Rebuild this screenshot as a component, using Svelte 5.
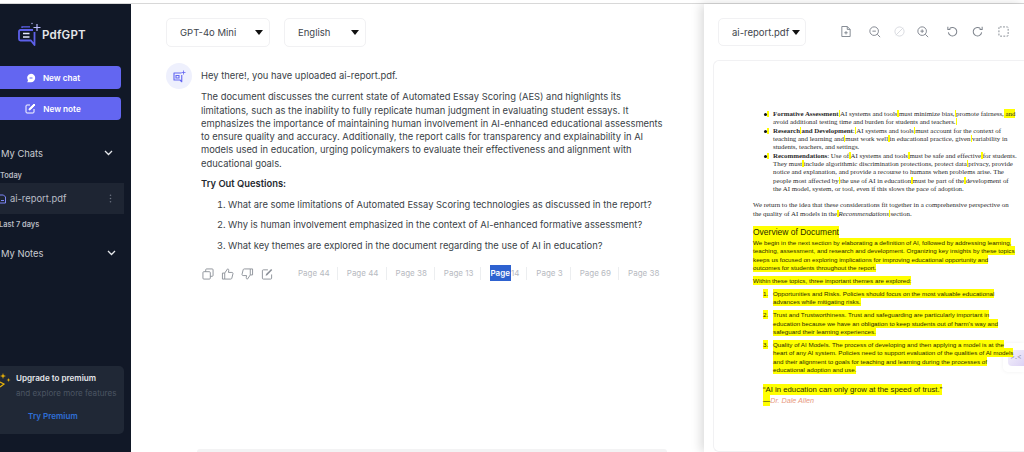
<script lang="ts">
	const questions = [
		'What are some limitations of Automated Essay Scoring technologies as discussed in the report?',
		'Why is human involvement emphasized in the context of AI-enhanced formative assessment?',
		'What key themes are explored in the document regarding the use of AI in education?'
	];
	const pages = [
		{ label: 'Page 44' },
		{ label: 'Page 44' },
		{ label: 'Page 38' },
		{ label: 'Page 13' },
		{ label: '14', picked: 'Page' },
		{ label: 'Page 3' },
		{ label: 'Page 69' },
		{ label: 'Page 38' }
	];

	// "|" marks the little highlight slivers the pdf viewer leaves between words
	const bullets = [
		[
			{ bold: 'Formative Assessment', text: '|AI systems and tools|must minimize bias,|promote fairness,', tail: ' and' },
			{ text: 'avoid additional testing time and burden for students and teachers.|' }
		],
		[
			{ bold: 'Research|and Development', text: ':|AI systems and tools|must account for the context of' },
			{ text: 'teaching and learning and|must work well|in educational practice, given|variability in' },
			{ text: 'students, teachers, and settings.' }
		],
		[
			{ bold: 'Recommendations', text: ': Use of|AI systems and tools|must be safe and effective|for students.' },
			{ text: 'They must|include algorithmic discrimination protections, protect data|privacy, provide' },
			{ text: 'notice and explanation, and provide a recourse to humans when problems arise. The' },
			{ text: 'people most affected by|the use of AI in education|must be part of the|development of' },
			{ text: 'the AI model, system, or tool, even if this slows the pace of adoption.' }
		]
	];
	const overview = [
		'We begin in the next section by elaborating a definition of AI, followed by addressing learning,',
		'teaching, assessment, and research and development. Organizing key insights by these topics',
		'keeps us focused on exploring implications for improving educational opportunity and',
		'outcomes for students throughout the report.'
	];
	const themes = [
		[
			'Opportunities and Risks. Policies should focus on the most valuable educational',
			'advances while mitigating risks.'
		],
		[
			'Trust and Trustworthiness. Trust and safeguarding are particularly important in',
			'education because we have an obligation to keep students out of harm\u2019s way and',
			'safeguard their learning experiences.'
		],
		[
			'Quality of AI Models. The process of developing and then applying a model is at the',
			'heart of any AI system. Policies need to support evaluation of the qualities of AI models',
			'and their alignment to goals for teaching and learning during the processes of',
			'educational adoption and use.'
		]
	];
</script>

{#snippet ticks(text)}
	{#each text.split('|') as piece, i}{#if i > 0}<mark class="tick"></mark>{/if}{piece}{/each}
{/snippet}

<div class="page">
	<div class="topline"></div>
	<div class="shell">
		<aside class="sidebar">
			<div class="brand">
				<svg width="24" height="26" viewBox="0 0 24 26" fill="none" stroke="#5d60ea" stroke-width="1.800">
					<path d="M15 8H2.500A1.500 1.500 0 0 0 1 9.500V17a1.500 1.500 0 0 0 1.500 1.500H13l3.500 4.500V10" stroke-linejoin="round" />
					<path d="M5 11.500h6.500M5 15h6.500" stroke="#e5e7ff" stroke-width="1.400" />
					<path d="M4 6V4.800h8" stroke-width="1.300" />
					<path d="M19 2v7M15.500 5.500h7" stroke="#b9bbff" stroke-width="1.200" />
					<circle cx="14" cy="1.500" r=".7" fill="#b9bbff" stroke="none" />
				</svg>
				<span>PdfGPT</span>
			</div>

			<button class="cta">
				<svg width="10" height="10" viewBox="0 0 10 10"><path d="M5 .8a4.200 4.200 0 0 1 0 8.400H1.200l.8-1.600A4.200 4.200 0 0 1 5 .8z" fill="#fff" /><path d="M3.500 5h3" stroke="#6366f1" /></svg>
				New chat
			</button>
			<button class="cta">
				<svg width="11" height="11" viewBox="0 0 11 11" fill="none" stroke="#fff" stroke-width="1"><path d="M9 6v3a1 1 0 0 1-1 1H2a1 1 0 0 1-1-1V3a1 1 0 0 1 1-1h3" /><path d="M4 7l.4-1.600L9 1l1 1-4.500 4.600z" fill="#fff" /></svg>
				New note
			</button>

			<div class="group first">
				<span>My Chats</span>
				<svg class="chev" width="9" height="6" viewBox="0 0 9 6" fill="none" stroke="#e5e7eb" stroke-width="1.300"><path d="M1 1l3.500 3.500L8 1" /></svg>
			</div>
			<div class="when">Today</div>
			<div class="chat">
				<svg width="6" height="10" viewBox="0 0 6 10" fill="none" stroke="#7c86f5" stroke-width="1"><path d="M-1 1h4.500L5.500 3v6H-1z" /><path d="M1 6.500h3" /></svg>
				<span>ai-report.pdf</span>
				<svg class="dots" width="3" height="9" viewBox="0 0 3 9" fill="#6b7280"><circle cx="1.500" cy="1.200" r=".8" /><circle cx="1.500" cy="4.500" r=".8" /><circle cx="1.500" cy="7.800" r=".8" /></svg>
			</div>
			<div class="when later">Last 7 days</div>
			<div class="group notes">
				<span>My Notes</span>
				<svg class="chev" width="9" height="6" viewBox="0 0 9 6" fill="none" stroke="#e5e7eb" stroke-width="1.300"><path d="M1 1l3.500 3.500L8 1" /></svg>
			</div>

			<div class="premium">
				<div class="premium-head">
					<svg class="spark" width="11" height="16" viewBox="0 0 11 16" fill="#eab308"><path d="M3 0l.7 2.300L6 3l-2.300.7L3 6l-.7-2.300L0 3l2.300-.7zM8.500 5l.5 1.500 1.500.5-1.500.5-.5 1.500L8 7.500 6.500 7 8 6.500z" /><path d="M0 9l4 2-4 3" fill="none" stroke="#eab308" stroke-width="1.200" /></svg>
					<div>
						<strong>Upgrade to premium</strong>
						<p>and explore more features</p>
					</div>
				</div>
				<a href="#premium">Try Premium</a>
			</div>
		</aside>

		<main class="chatpane">
			<div class="selects">
				<div class="pick model">
					<span>GPT-4o Mini</span>
					<i class="caret"></i>
				</div>
				<div class="pick lang">
					<span>English</span>
					<i class="caret"></i>
				</div>
			</div>

			<div class="message">
				<div class="avatar">
					<svg width="14" height="14" viewBox="0 0 28 28" fill="none" stroke="#6366f1" stroke-width="2.200">
						<path d="M19 8H4v14h12l3.500 3.500V12" stroke-linejoin="round" />
						<path d="M8 13h6v5H8z" />
						<path d="M23 3v8M19 7h8" stroke-width="1.600" />
					</svg>
				</div>
				<div class="body">
					<p class="hello">Hey there!, you have uploaded ai-report.pdf.</p>
					<p class="summary">
						The document discusses the current state of Automated Essay Scoring (AES) and highlights its
						limitations, such as the inability to fully replicate human judgment in evaluating student essays. It
						emphasizes the importance of maintaining human involvement in AI-enhanced educational assessments
						to ensure quality and accuracy. Additionally, the report calls for transparency and explainability in AI
						models used in education, urging policymakers to evaluate their effectiveness and alignment with
						educational goals.
					</p>
					<h4>Try Out Questions:</h4>
					<ol>
						{#each questions as q}
							<li>{q}</li>
						{/each}
					</ol>

					<div class="actions">
						<div class="tools">
							<svg width="12" height="12" viewBox="0 0 13 13" fill="none" stroke="#8b9098"><rect x="1" y="4" width="8" height="8" rx="1" /><path d="M4 4V2a1 1 0 0 1 1-1h6a1 1 0 0 1 1 1v6a1 1 0 0 1-1 1H9" /></svg>
							<svg width="13" height="12" viewBox="0 0 14 13" fill="none" stroke="#8b9098"><path d="M4 5.500V12H1.500V5.500zM4 5.500L7 1c1.200 0 1.600.9 1.300 2L8 4.800h3.800c.9 0 1.300.7 1.100 1.500l-1.200 4.800c-.2.600-.6.900-1.200.9H4" stroke-linejoin="round" /></svg>
							<svg width="13" height="12" viewBox="0 0 14 13" fill="none" stroke="#8b9098"><path d="M10 7.500V1h2.500v6.500zM10 7.500L7 12c-1.200 0-1.600-.9-1.300-2L6 8.200H2.200c-.9 0-1.300-.7-1.100-1.500l1.200-4.800C2.500 1.300 2.900 1 3.500 1H10" stroke-linejoin="round" /></svg>
							<svg width="12" height="12" viewBox="0 0 13 13" fill="none" stroke="#8b9098"><path d="M11.500 7v4a1 1 0 0 1-1 1h-8a1 1 0 0 1-1-1V3a1 1 0 0 1 1-1h5" /><path d="M5 8.500l.5-2L11 1l1.200 1.200-5.500 5.600z" fill="#8b9098" stroke="none" /></svg>
						</div>
						<div class="pages">
							{#each pages as p}
								<span class="pg">{#if p.picked}<em>{p.picked}</em>{/if}{p.label}</span>
							{/each}
						</div>
					</div>
				</div>
			</div>

			<div class="composer"></div>
		</main>

		<section class="viewer">
			<div class="viewer-bar">
				<div class="pick file">
					<span>ai-report.pdf</span>
					<i class="caret"></i>
				</div>
				<div class="viewer-tools">
					<svg class="t-file" width="10" height="13" viewBox="0 0 12 14" fill="none" stroke="#7d838c" stroke-width="1.100"><path d="M1 1h6.500L11 4.500V13H1zM7.500 1v3.500H11" /><path d="M6 6.500v4M4 8.500h4" /></svg>
					<svg class="t-out" width="12" height="12" viewBox="0 0 14 14" fill="none" stroke="#7d838c" stroke-width="1.100"><circle cx="6" cy="6" r="5" /><path d="M4 6h4M9.700 9.700L13 13" /></svg>
					<svg class="t-off" width="11" height="11" viewBox="0 0 12 12" fill="none" stroke="#d6d9de"><circle cx="6" cy="6" r="5" /><path d="M2 10l8-8" /></svg>
					<svg class="t-in" width="12" height="12" viewBox="0 0 14 14" fill="none" stroke="#7d838c" stroke-width="1.100"><circle cx="6" cy="6" r="5" /><path d="M4 6h4M6 4v4M9.700 9.700L13 13" /></svg>
					<svg class="t-undo" width="11" height="11" viewBox="0 0 13 13" fill="none" stroke="#7d838c" stroke-width="1.200"><path d="M3 3.200A5 5 0 1 1 1.600 7.500" /><path d="M1 1v3h3" /></svg>
					<svg class="t-redo" width="11" height="11" viewBox="0 0 13 13" fill="none" stroke="#7d838c" stroke-width="1.200"><path d="M10 3.200A5 5 0 1 0 11.400 7.500" /><path d="M12 1v3H9" /></svg>
					<svg class="t-crop" width="12" height="12" viewBox="0 0 13 13" fill="none" stroke="#7d838c" stroke-dasharray="2 1.500"><rect x="1" y="1" width="10" height="10" rx="1" /></svg>
				</div>
			</div>

			<div class="paper">
				<ul class="bullets">
					{#each bullets as item}
						<li>
							<mark class="dotmark"></mark>
							{#each item as line}
								<div class="ln">{#if line.bold}<b>{@render ticks(line.bold)}</b>{/if}{@render ticks(line.text)}{#if line.tail}<mark>{line.tail}</mark>{/if}</div>
							{/each}
						</li>
					{/each}
				</ul>
				<div class="return">
					<div class="ln">We return to the idea that these considerations fit together in a comprehensive perspective on</div>
					<div class="ln">the quality of AI models in the<mark class="tick"></mark><i>Recommendations</i><mark class="tick"></mark>section.</div>
				</div>

				<div class="sans">
					<h3><mark>Overview of Document</mark></h3>
					<div class="para">
						{#each overview as line}
							<div class="ln"><mark>{line}</mark></div>
						{/each}
					</div>
					<div class="ln within"><mark>Within these topics, three important themes are explored:</mark></div>
					{#each themes as theme, t}
						<div class="theme">
							<span class="num"><mark>{t + 1}.</mark></span>
							<div>
								{#each theme as line}
									<div class="ln"><mark>{line}</mark></div>
								{/each}
							</div>
						</div>
					{/each}
					<div class="quote"><mark>“AI in education can only grow at the speed of trust.”</mark></div>
					<div class="cite"><mark>—</mark><i>Dr. Dale Allen</i></div>
				</div>
			</div>

			<div class="float"></div>
		</section>
	</div>
</div>

<style>
	:global(body) {
		margin: 0;
		background: #fff;
	}

	.page {
		width: 1024px;
		height: 452px;
		overflow: hidden;
		display: flex;
		flex-direction: column;
		font-family: Inter, 'Noto Sans', sans-serif;
	}

	.topline {
		height: 3px;
		flex: none;
		background: #fff;
		border-bottom: 1px solid #d8d8d8;
	}

	.shell {
		flex: 1;
		min-height: 0;
		display: flex;
	}

	/* sidebar */
	.sidebar {
		width: 131px;
		flex: none;
		box-sizing: border-box;
		background: #111827;
		display: flex;
		flex-direction: column;
		padding-right: 10px;
		color: #d1d5db;
	}

	.brand {
		display: flex;
		align-items: center;
		gap: 0;
		height: 38px;
		margin: 12px 0 12px 18px;
		font-size: 11.500px;
		font-weight: 600;
		color: #e5e7eb;
		letter-spacing: 0.2px;
	}

	.cta {
		height: 23px;
		flex: none;
		border: 0;
		border-radius: 0 4px 4px 0;
		background: #6366f1;
		color: #fff;
		font: 600 8.200px Inter, sans-serif;
		display: flex;
		align-items: center;
		justify-content: center;
		gap: 7px;
		padding: 0 15px 0 0;
		margin-bottom: 8px;
	}

	.group {
		display: flex;
		justify-content: space-between;
		align-items: center;
		padding-left: 1px;
		font-size: 9.400px;
		color: #c9ccd2;
		height: 14px;
	}

	.group.first {
		margin-top: 18px;
		padding-right: 8px;
	}

	.group.notes {
		margin-top: 16px;
		padding-right: 5px;
	}

	.when {
		font-size: 7.400px;
		font-weight: 600;
		color: #b6bac2;
		margin-top: 10px;
		height: 11px;
		line-height: 11px;
	}

	.when.later {
		margin-top: 5px;
		margin-left: -1px;
	}

	.chat {
		height: 31px;
		flex: none;
		margin-top: 2px;
		margin-right: -3px;
		background: #1e2533;
		display: flex;
		align-items: center;
		padding: 0 12px 0 0;
		gap: 4px;
		font-size: 9.400px;
		color: #b9bdc6;
	}

	.chat span {
		flex: 1;
	}

	.premium {
		margin-top: auto;
		margin-bottom: 18px;
		margin-right: -3px;
		height: 68px;
		flex: none;
		box-sizing: border-box;
		background: #202836;
		border-radius: 0 5px 5px 0;
		padding-top: 7px;
		position: relative;
	}

	.premium-head {
		display: flex;
		gap: 5px;
	}

	.premium strong {
		display: block;
		font-size: 8.100px;
		font-weight: 600;
		color: #e5e7eb;
		line-height: 11px;
	}

	.premium p {
		margin: 4px 0 0;
		font-size: 8.100px;
		color: #4b5563;
		line-height: 11px;
		white-space: nowrap;
	}

	.premium a {
		display: block;
		margin: 12px 0 0 28px;
		font-size: 8.100px;
		font-weight: 600;
		color: #2f6fd6;
		text-decoration: none;
		line-height: 11px;
	}

	/* chat column */
	.chatpane {
		width: 573px;
		flex: none;
		box-sizing: border-box;
		background: #fff;
		display: flex;
		flex-direction: column;
		padding-top: 14px;
	}

	.selects {
		display: flex;
		gap: 14px;
		padding-left: 35px;
	}

	.pick {
		height: 29px;
		box-sizing: border-box;
		border: 1px solid #f1f1f3;
		border-radius: 5px;
		display: flex;
		align-items: center;
		justify-content: space-between;
		font-size: 9.500px;
		color: #41454c;
		white-space: nowrap;
	}

	.model {
		width: 104px;
		padding: 0 4px 0 13px;
	}

	.lang {
		width: 82px;
		padding: 0 4px 0 13px;
	}

	.caret {
		width: 0;
		height: 0;
		border-left: 4.500px solid transparent;
		border-right: 4.500px solid transparent;
		border-top: 5px solid #111;
		margin-right: 2px;
	}

	.message {
		display: flex;
		gap: 9px;
		padding: 16px 0 0 35px;
	}

	.avatar {
		width: 26px;
		height: 26px;
		flex: none;
		border-radius: 50%;
		background: #eef0fd;
		display: flex;
		align-items: center;
		justify-content: center;
	}

	.body {
		flex: 1;
		min-width: 0;
		font-size: 9.400px;
		line-height: 13.300px;
		color: #3a3f47;
		padding-top: 6px;
	}

	.body p {
		margin: 0;
	}

	.hello {
		margin-bottom: 8px !important;
	}

	.summary {
		width: 480px;
		white-space: pre-line;
	}

	.body h4 {
		margin: 7px 0 0;
		font-size: 9.400px;
		font-weight: 600;
		line-height: 13.300px;
		color: #262a30;
	}

	.body ol {
		margin: 8px 0 0;
		padding: 0 0 0 27px;
		white-space: nowrap;
	}

	.body li {
		margin-bottom: 6.800px;
	}

	.actions {
		display: flex;
		align-items: center;
		margin-top: 14px;
		height: 16px;
	}

	.tools {
		display: flex;
		gap: 7px;
		width: 97px;
		flex: none;
		box-sizing: border-box;
		padding-left: 1px;
	}

	.pages {
		display: flex;
		font-size: 8px;
		color: #b7bac1;
		white-space: nowrap;
	}

	.pg {
		padding: 0 7px 0 9px;
		line-height: 13px;
		border-right: 1px solid #eceef0;
	}

	.pg:first-child {
		padding-left: 0;
	}

	.pg:last-child {
		border-right: 0;
	}

	.pg em {
		font-style: normal;
		font-weight: 600;
		background: #2e62d0;
		color: #fff;
		padding: 3px 1px 3px 0;
	}

	.composer {
		margin: auto 37px 0 66px;
		height: 3px;
		flex: none;
		background: #f3f3f4;
		border-radius: 4px 4px 0 0;
	}

	/* pdf side */
	.viewer {
		flex: 1;
		min-width: 0;
		position: relative;
		background: #fff;
		box-shadow: -3px 0 10px rgba(0, 0, 0, 0.15);
		display: flex;
		flex-direction: column;
		padding-top: 14px;
	}

	.viewer-bar {
		display: flex;
		padding-left: 14px;
		height: 27px;
		flex: none;
	}

	.file {
		width: 88px;
		height: 28px;
		padding: 0 0 0 13px;
		flex: none;
		justify-content: flex-start;
		gap: 3px;
	}

	.viewer-tools {
		display: flex;
		align-items: center;
	}

	.viewer-tools svg {
		flex: none;
	}

	.t-file { margin-left: 35px; }
	.t-out { margin-left: 18px; }
	.t-off { margin-left: 13px; }
	.t-in { margin-left: 12px; }
	.t-undo { margin-left: 18px; }
	.t-redo { margin-left: 14px; }
	.t-crop { margin-left: 15px; }

	.paper {
		position: relative;
		z-index: 1;
		margin: 15px 0 0 9px;
		flex: 1;
		min-height: 0;
		border: 1px solid #f1f1f3;
		border-right: 0;
		border-radius: 6px 0 0 6px;
		box-sizing: border-box;
		padding: 49px 0 0 39px;
		color: #2b2b2b;
		font-family: 'Liberation Serif', serif;
		font-size: 6.880px;
		white-space: nowrap;
		overflow: hidden;
	}

	.ln {
		line-height: 8.350px;
	}

	mark {
		background: #ffff00;
		color: inherit;
		padding: 1px 0;
	}

	.tick {
		display: inline-block;
		width: 1.500px;
		height: 7px;
		padding: 0;
		vertical-align: -1px;
	}

	.bullets {
		margin: 0;
		padding: 0 0 0 20px;
		list-style: none;
	}

	.bullets li {
		position: relative;
	}

	.dotmark {
		position: absolute;
		left: -6px;
		top: 1px;
		width: 2px;
		height: 6px;
		padding: 0;
	}

	.dotmark::before {
		content: '';
		position: absolute;
		left: -3px;
		top: 2px;
		width: 3px;
		height: 3px;
		border-radius: 50%;
		background: #111;
	}

	.return {
		margin-top: 8px;
	}

	.sans {
		font-family: 'Liberation Sans', Arial, sans-serif;
		font-size: 6.250px;
		color: #2a2a00;
	}

	.sans h3 {
		margin: 8px 0 0;
		font-size: 8.500px;
		font-weight: 400;
		line-height: 12px;
	}

	.para {
		margin-top: 1px;
	}

	.within {
		margin-top: 4.500px;
	}

	.theme {
		display: flex;
		margin: 4.600px 0 0 10px;
	}

	.theme .num {
		width: 10px;
		line-height: 8.350px;
		flex: none;
	}

	.quote {
		margin: 11px 0 0 10px;
		font-size: 7.750px;
		line-height: 10px;
	}

	.cite {
		font-size: 7.200px;
		line-height: 9px;
		color: #e89a80;
		margin-top: 1px;
		margin-left: 10px;
	}

	.cite mark {
		color: #222;
	}

	/* little mascot tab; sits under the page text, as in the viewer */
	.float {
		position: absolute;
		z-index: 0;
		right: 0;
		top: 339px;
		width: 21px;
		height: 29px;
		background: #fff;
		border-radius: 5px 0 0 5px;
		box-shadow: 0 0 4px rgba(0, 0, 0, 0.06);
		display: flex;
		align-items: center;
		justify-content: flex-end;
	}

	.float::after {
		content: '>.<';
		width: 16px;
		height: 16px;
		border-radius: 4px 0 0 4px;
		background: linear-gradient(135deg, #f5f3fb, #dcd2f5);
		font-size: 7px;
		color: #8a8a94;
		text-align: center;
		line-height: 14px;
	}
</style>
